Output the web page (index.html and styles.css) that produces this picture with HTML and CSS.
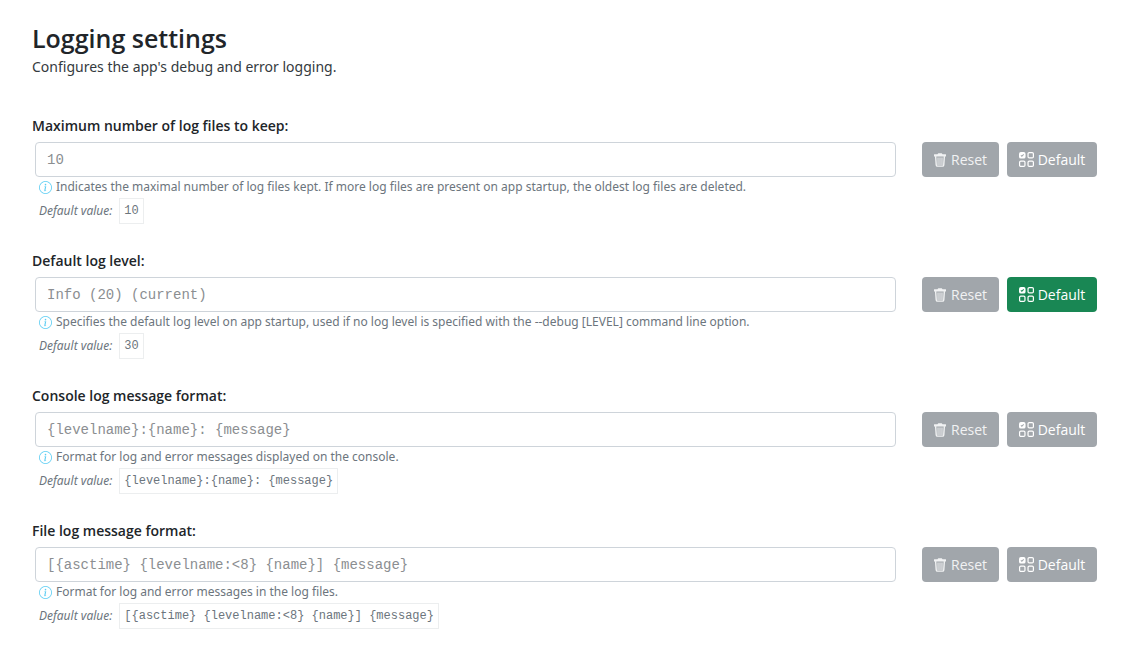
FILE: index.html
```
<!DOCTYPE html>
<html lang="en">
<head>
<meta charset="utf-8">
<meta name="viewport" content="width=device-width, initial-scale=1">
<title>Logging settings</title>
<link rel="stylesheet" href="styles.css">
</head>
<body>
<svg class="sprite" aria-hidden="true">
  <symbol id="info" viewBox="0 0 16 16">
    <path d="M8 15A7 7 0 1 1 8 1a7 7 0 0 1 0 14m0 1A8 8 0 1 0 8 0a8 8 0 0 0 0 16"/>
    <path d="m8.93 6.588-2.29.287-.082.38.45.083c.294.07.352.176.288.469l-.738 3.468c-.194.897.105 1.319.808 1.319.545 0 1.178-.252 1.465-.598l.088-.416c-.2.176-.492.246-.686.246-.275 0-.375-.193-.304-.533zM9 4.5a1 1 0 1 1-2 0 1 1 0 0 1 2 0"/>
  </symbol>
  <symbol id="trash" viewBox="0 0 14 16">
    <path d="M5 0h4l1 1.200h3.500a.5.5 0 0 1 .5.500v1.800a.5.5 0 0 1-.5.500H.5a.5.5 0 0 1-.5-.500V1.700a.5.5 0 0 1 .5-.500H4z"/>
    <path fill="none" stroke="currentColor" stroke-width="1.600" d="M1.900 3.500l.7 10.200a1.500 1.500 0 0 0 1.500 1.400h5.800a1.500 1.500 0 0 0 1.500-1.400l.7-10.200"/>
    <path fill="none" stroke="currentColor" stroke-width="1.200" d="M4.700 5v8.700M7 5v8.700M9.300 5v8.700"/>
  </symbol>
  <symbol id="grid" viewBox="0 0 16 16">
    <path fill-rule="evenodd" d="M2 0h3a2 2 0 0 1 2 2v3a2 2 0 0 1-2 2H2a2 2 0 0 1-2-2V2a2 2 0 0 1 2-2m3.354 2.854-.708-.708L3 3.793l-.646-.647-.708.708L3 5.207z"/>
    <g fill="none" stroke="currentColor" stroke-width="1.300">
      <rect x="9.650" y=".65" width="5.700" height="5.700" rx="1.300"/>
      <rect x=".65" y="9.650" width="5.700" height="5.700" rx="1.300"/>
      <rect x="9.650" y="9.650" width="5.700" height="5.700" rx="1.300"/>
    </g>
  </symbol>
</svg>
<main class="settings">
  <header class="intro">
    <h1 class="title">Logging settings</h1>
    <p class="lead">Configures the app's debug and error logging.</p>
  </header>
  <form class="fields">
    <section class="field">
      <label class="label" for="max-files">Maximum number of log files to keep:</label>
      <div class="row">
        <input class="control" id="max-files" type="text" placeholder="10">
        <button class="btn reset" type="button"><svg class="icon trash"><use href="#trash"/></svg>Reset</button>
        <button class="btn default" type="button"><svg class="icon"><use href="#grid"/></svg>Default</button>
      </div>
      <p class="help"><svg class="info"><use href="#info"/></svg>Indicates the maximal number of log files kept. If more log files are present on app startup, the oldest log files are deleted.</p>
      <p class="preset"><em>Default value:</em><code class="value">10</code></p>
    </section>
    <section class="field">
      <label class="label" for="level">Default log level:</label>
      <div class="row">
        <select class="control" id="level"><option>Info (20) (current)</option></select>
        <button class="btn reset" type="button"><svg class="icon trash"><use href="#trash"/></svg>Reset</button>
        <button class="btn default active" type="button"><svg class="icon"><use href="#grid"/></svg>Default</button>
      </div>
      <p class="help"><svg class="info"><use href="#info"/></svg>Specifies the default log level on app startup, used if no log level is specified with the --debug [LEVEL] command line option.</p>
      <p class="preset"><em>Default value:</em><code class="value">30</code></p>
    </section>
    <section class="field">
      <label class="label" for="console-format">Console log message format:</label>
      <div class="row">
        <input class="control" id="console-format" type="text" placeholder="{levelname}:{name}: {message}">
        <button class="btn reset" type="button"><svg class="icon trash"><use href="#trash"/></svg>Reset</button>
        <button class="btn default" type="button"><svg class="icon"><use href="#grid"/></svg>Default</button>
      </div>
      <p class="help"><svg class="info"><use href="#info"/></svg>Format for log and error messages displayed on the console.</p>
      <p class="preset"><em>Default value:</em><code class="value">{levelname}:{name}: {message}</code></p>
    </section>
    <section class="field">
      <label class="label" for="file-format">File log message format:</label>
      <div class="row">
        <input class="control" id="file-format" type="text" placeholder="[{asctime} {levelname:&lt;8} {name}] {message}">
        <button class="btn reset" type="button"><svg class="icon trash"><use href="#trash"/></svg>Reset</button>
        <button class="btn default" type="button"><svg class="icon"><use href="#grid"/></svg>Default</button>
      </div>
      <p class="help"><svg class="info"><use href="#info"/></svg>Format for log and error messages in the log files.</p>
      <p class="preset"><em>Default value:</em><code class="value">[{asctime} {levelname:&lt;8} {name}] {message}</code></p>
    </section>
  </form>
</main>
</body>
</html>
```
FILE: styles.css
```
* { box-sizing: border-box; }
body {
  margin: 0;
  background: #fff;
  color: #212529;
  font-family: "Open Sans", "Noto Sans", sans-serif;
  font-size: 14px;
  line-height: 22px;
}
h1, p { margin: 0; }
.sprite { display: none; }
.settings { padding: 21px 39px 24px 32px; }
.title { font-size: 25px; font-weight: 600; line-height: 34px; }
.lead { margin-top: 1px; color: #343a40; font-family: "Noto Sans", sans-serif; }
.fields { display: flex; flex-direction: column; gap: 26px; margin-top: 37px; }
.field { display: flex; flex-direction: column; }
.label { align-self: flex-start; font-weight: 600; line-height: 22px; margin-bottom: 5px; }
.row { display: flex; align-items: stretch; height: 35px; padding-left: 3px; }
.control {
  flex: 1;
  min-width: 0;
  margin: 0 26px 0 0;
  padding: 0 11px;
  border: 1px solid #ced4da;
  border-radius: 4px;
  background: #fff;
  color: #8b8e91;
  font-family: "Liberation Mono", monospace;
  font-size: 14px;
  appearance: none;
}
.control::placeholder { color: #8b8e91; opacity: 1; }
.btn {
  display: flex;
  align-items: center;
  justify-content: center;
  gap: 4px;
  padding: 0;
  border: 0;
  border-radius: 4px;
  background: #a1a6ab;
  color: #fff;
  font-family: inherit;
  font-size: 14px;
}
.reset { width: 77px; margin-right: 8px; color: #f1f2f3; }
.reset .icon { margin-right: 1px; }
.default { width: 90px; }
.active { background: #198754; }
.icon { width: 15px; height: 15px; fill: currentColor; }
.icon.trash { width: 12px; height: 14px; }
.help, .preset {
  display: flex;
  align-items: center;
  padding-left: 7px;
  color: #6c757d;
  font-family: "Noto Sans", sans-serif;
  font-size: 12px;
  line-height: 20px;
}
.help { gap: 4px; }
.info { flex: none; width: 13px; height: 13px; fill: #5bcdf3; }
.preset { gap: 7px; margin-top: 1px; }
.value {
  padding: 1px 4px;
  border: 1px solid #eceeef;
  line-height: 22px;
  font-family: "Liberation Mono", monospace;
  font-size: 12px;
}
```
